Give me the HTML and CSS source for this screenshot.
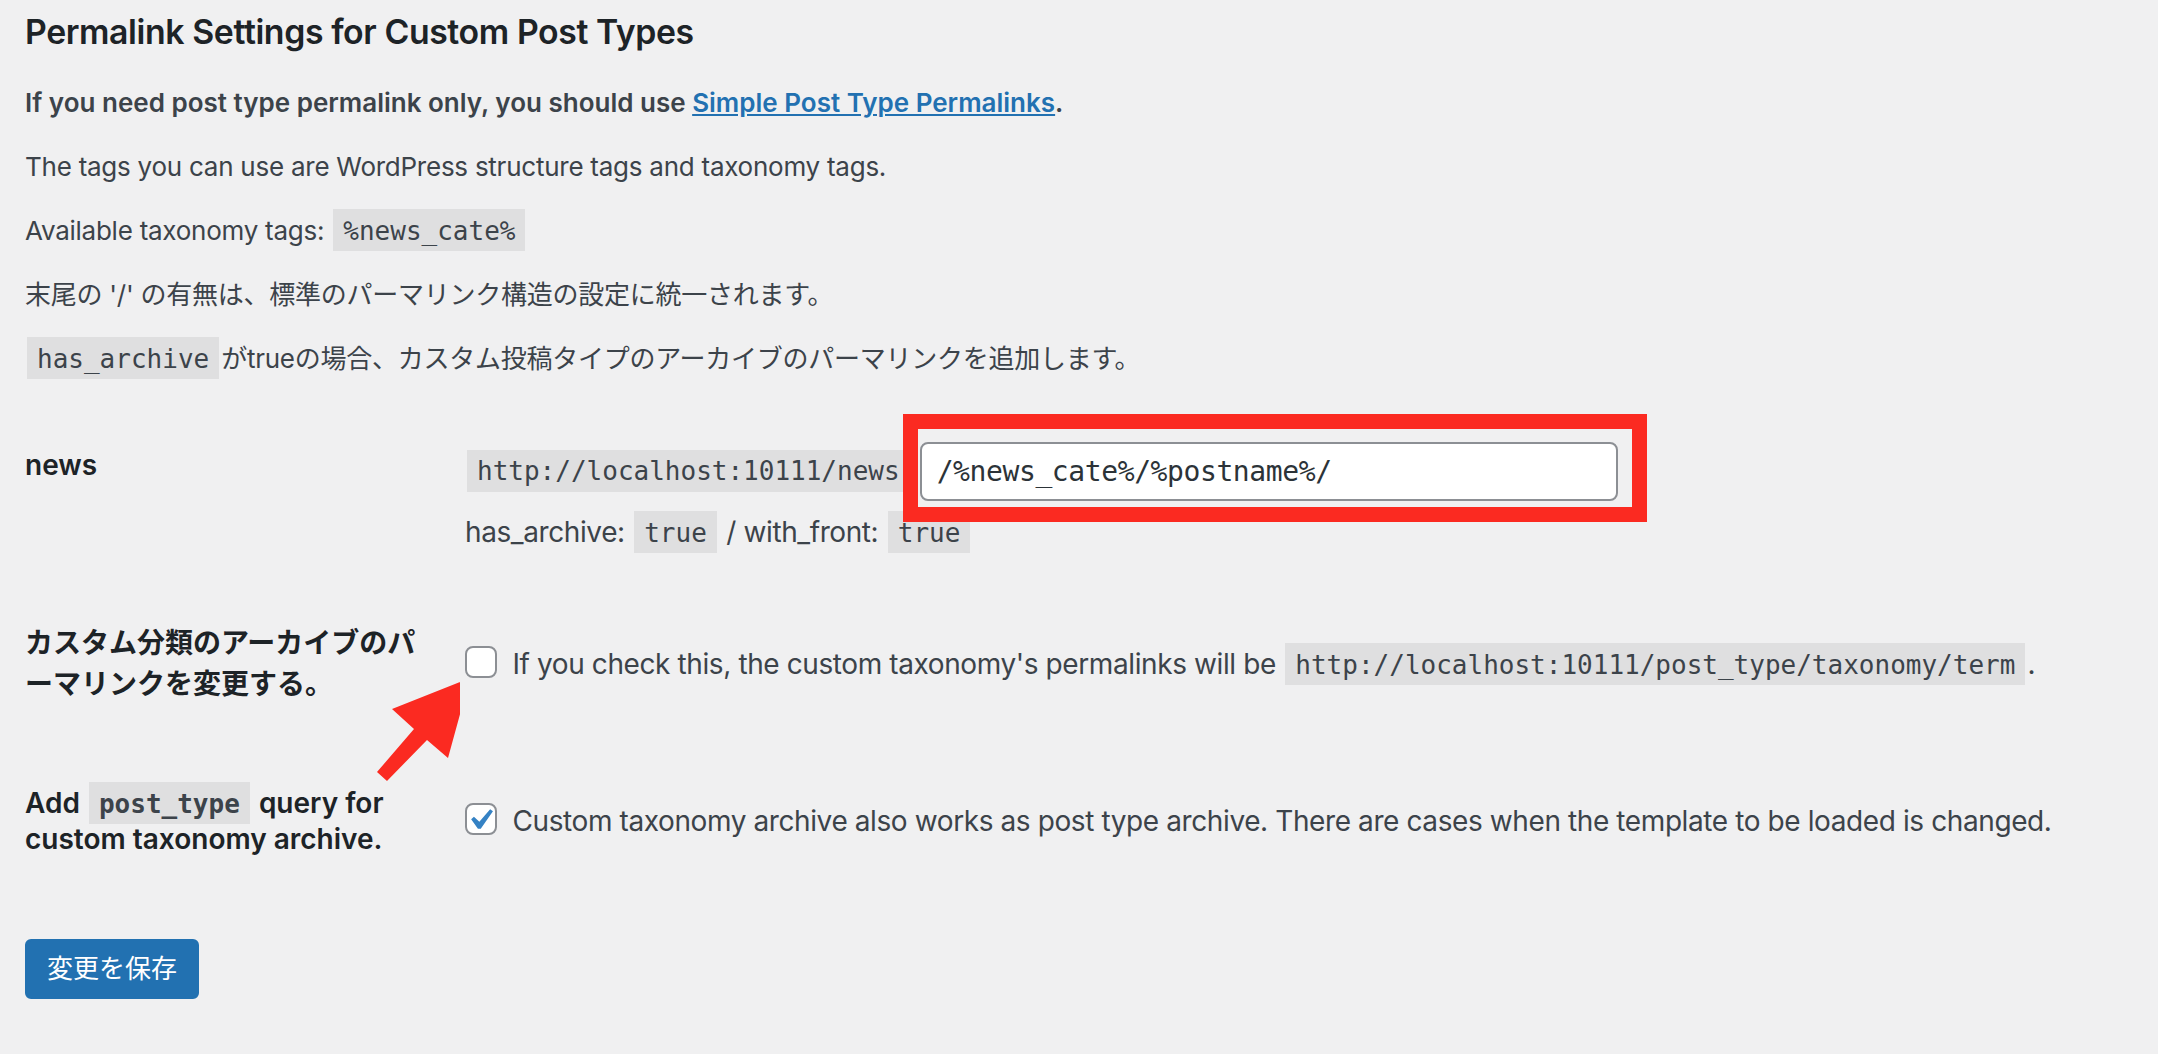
FILE: index.html
```html
<!DOCTYPE html>
<html lang="ja">
<head>
<meta charset="utf-8">
<title>Permalink Settings for Custom Post Types</title>
<link rel="stylesheet" href="styles.css">
</head>
<body>
<div class="wrap">
  <h2 class="title">Permalink Settings for Custom Post Types</h2>
  <p><strong>If you need post type permalink only, you should use <a href="#">Simple Post Type Permalinks</a>.</strong></p>
  <p>The tags you can use are WordPress structure tags and taxonomy tags.</p>
  <p>Available taxonomy tags: <code>%news_cate%</code></p>
  <p>末尾の '/' の有無は、標準のパーマリンク構造の設定に統一されます。</p>
  <p><code>has_archive</code>がtrueの場合、カスタム投稿タイプのアーカイブのパーマリンクを追加します。</p>

  <table class="form-table">
    <tbody>
      <tr>
        <th scope="row">news</th>
        <td>
          <div class="permalink-line">
            <code>http://localhost:10111/news</code>
            <span class="highlight"><input type="text" class="regular-text" value="/%news_cate%/%postname%/"></span>
          </div>
          <p class="meta">has_archive: <code>true</code> / with_front: <code>true</code></p>
        </td>
      </tr>
      <tr>
        <th scope="row" class="label-ja">カスタム分類のアーカイブのパーマリンクを変更する。</th>
        <td><label><input type="checkbox"> If you check this, the custom taxonomy's permalinks will be <code>http://localhost:10111/post_type/taxonomy/term</code>.</label></td>
      </tr>
      <tr>
        <th scope="row">Add <code>post_type</code> query for custom taxonomy archive.</th>
        <td><label><input type="checkbox" checked> Custom taxonomy archive also works as post type archive. There are cases when the template to be loaded is changed.</label></td>
      </tr>
    </tbody>
  </table>

  <p class="submit"><button type="button" class="button-primary">変更を保存</button></p>

  <svg class="arrow" viewBox="370 670 90 120" width="90" height="120" aria-hidden="true">
    <polygon points="470,678 392,709 414,729 377,772 387,781 427,740 448,758" fill="#fb2a21"/>
  </svg>
</div>
</body>
</html>
```

FILE: styles.css
```css
html {
  background: #f0f0f1;
}

body {
  margin: 0;
  background: #f0f0f1;
  color: #3c434a;
  font-family: Inter, "Noto Sans CJK JP", sans-serif;
  font-size: 26px;
  line-height: 1.4;
}

.wrap {
  position: relative;
  padding: 14px 0 0 25px;
}

.title {
  margin: 0 0 33px;
  font-size: 33.8px;
  line-height: 36.4px;
  font-weight: 600;
  letter-spacing: -0.4px;
  color: #1d2327;
}

p {
  margin: 25px 0;
  line-height: 39px;
  letter-spacing: -0.25px;
}

strong {
  font-weight: 600;
  letter-spacing: 0;
}

a {
  color: #2271b1;
  text-decoration: underline;
}

code {
  font-family: "DejaVu Sans Mono", monospace;
  font-size: 26px;
  line-height: 1;
  letter-spacing: 0;
  padding: 7px 10px 5px;
  margin: 0 2px;
  background: rgba(0, 0, 0, 0.07);
  color: #3c434a;
}

.form-table {
  border-collapse: collapse;
  width: 100%;
  margin: 28.5px 0 0;
  font-size: 28px;
}

.form-table th {
  width: 400px;
  padding: 40px 20px 40px 0;
  text-align: left;
  vertical-align: top;
  font-weight: 600;
  line-height: 36.4px;
  color: #1d2327;
}

.form-table th.label-ja {
  line-height: 41px;
}

.form-table td {
  padding: 30px 20px;
  line-height: 1.3;
  letter-spacing: -0.4px;
  vertical-align: middle;
}

.permalink-line {
  display: flex;
  align-items: center;
  gap: 8px;
  padding: 5px 0;
}

.permalink-line code {
  line-height: 32px;
  padding: 5px 10px;
}

.highlight {
  position: relative;
  display: inline-flex;
}

.highlight::after {
  content: "";
  position: absolute;
  left: -17px;
  top: -28px;
  right: -29px;
  bottom: -21px;
  border: 15px solid #fb2a21;
  pointer-events: none;
}

.regular-text {
  width: 698px;
  height: 59px;
  box-sizing: border-box;
  margin: 0;
  padding: 0 15px;
  border: 2px solid #8c8f94;
  border-radius: 8px;
  background: #fff;
  color: #2c3338;
  font-family: "DejaVu Sans Mono", monospace;
  font-size: 28px;
  letter-spacing: -0.4px;
}

.meta {
  margin: 5px 0 0;
  line-height: 42px;
  letter-spacing: -0.4px;
}

.form-table input[type="checkbox"] {
  appearance: none;
  -webkit-appearance: none;
  box-sizing: border-box;
  width: 32px;
  height: 32px;
  margin: -8px 8px 0 0;
  border: 2px solid #8c8f94;
  border-radius: 8px;
  background: #fff;
  vertical-align: middle;
}

.form-table input[type="checkbox"]:checked {
  background: #fff url("data:image/svg+xml,%3Csvg xmlns='http://www.w3.org/2000/svg' viewBox='0 0 20 20'%3E%3Cpath d='M14.83 4.89l1.34.94-5.81 8.38H9.02L5.78 9.67l1.34-1.25 2.57 2.4z' fill='%233582c4'/%3E%3C/svg%3E") -8px -6px / 42px 42px no-repeat;
}

.submit {
  margin: 21px 0 0;
  padding: 20px 0;
}

.button-primary {
  box-sizing: border-box;
  min-height: 60px;
  margin: 0;
  padding: 0 20px;
  border: 2px solid #2271b1;
  border-radius: 6px;
  background: #2271b1;
  color: #fff;
  font-family: Inter, "Noto Sans CJK JP", sans-serif;
  font-size: 26px;
  line-height: 56px;
  cursor: pointer;
}

.arrow {
  position: absolute;
  left: 370px;
  top: 670px;
}
```
